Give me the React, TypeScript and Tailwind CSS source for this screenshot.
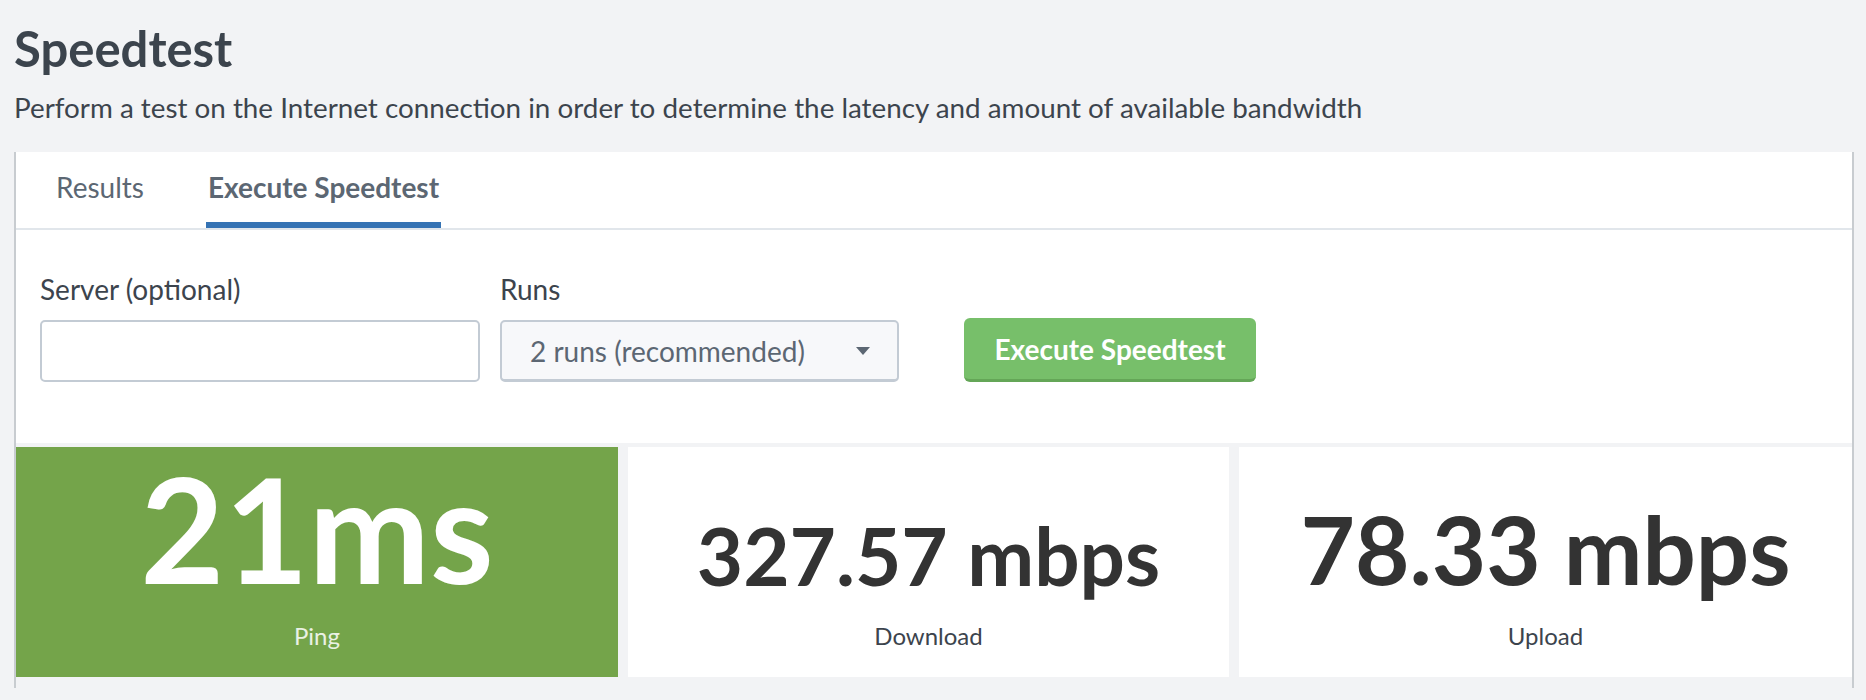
import React from "react";

const stats = [
  {
    id: "ping",
    value: "21ms",
    label: "Ping",
    card: "bg-[#74a44a]",
    valueClass: "text-white text-[145px] leading-[145px] pt-[9px]",
    labelClass: "text-white/85 mt-[20px]",
  },
  {
    id: "download",
    value: "327.57 mbps",
    label: "Download",
    card: "bg-white",
    valueClass: "text-[#333333] text-[80px] leading-[80px] pt-[68px]",
    labelClass: "text-[#3c444d] mt-[26px]",
  },
  {
    id: "upload",
    value: "78.33 mbps",
    label: "Upload",
    card: "bg-white",
    valueClass: "text-[#333333] text-[94px] leading-[94px] pt-[55px]",
    labelClass: "text-[#3c444d] mt-[25px]",
  },
] as const;

export default function App() {
  return (
    <div className="min-h-[700px] bg-[#f2f3f5] font-['Lato','Open_Sans',sans-serif] text-[#3c444d]">
      <div className="pl-[14px] pr-[12px]">
        {/* Page header */}
        <h1 className="pt-[20px] text-[49px] leading-[56px] font-bold text-[#3c444d]">Speedtest</h1>
        <p className="mt-[14px] text-[27.8px] leading-[36px]">
          Perform a test on the Internet connection in order to determine the latency and amount of
          available bandwidth
        </p>

        {/* Panel */}
        <div className="mt-[26px] border-x-2 border-[#c8ccd0] bg-white">
          <div className="flex gap-[62px] border-b-2 border-[#e1e6eb] pl-[40px] text-[28px] leading-[34px]">
            <button className="pt-[18px] pb-[18px] border-b-[6px] border-transparent text-[#5c6773]">
              Results
            </button>
            <button className="px-[2px] pt-[18px] pb-[18px] border-b-[6px] border-[#3573b4] font-bold text-[#5c6773]">
              Execute Speedtest
            </button>
          </div>

          <div className="flex items-end pl-[24px] pt-[43px] pb-[61px] text-[28px] leading-[32px]">
            <div className="flex flex-col">
              <label className="mb-[15px]">Server (optional)</label>
              <input
                type="text"
                className="h-[62px] w-[440px] rounded-[5px] border-2 border-[#c3cbd4] bg-white px-[20px] outline-none"
              />
            </div>
            <div className="ml-[20px] flex flex-col">
              <label className="mb-[15px]">Runs</label>
              <div className="flex h-[62px] w-[399px] items-center justify-between rounded-[5px] border-2 border-b-[3px] border-[#c3cbd4] bg-[#f7f8fa] pl-[28px] pr-[27px] text-[#5c6773]">
                <span>2 runs (recommended)</span>
                <svg width="14" height="8" viewBox="0 0 14 8">
                  <polygon points="0,0 14,0 7,8" fill="#5c6773" />
                </svg>
              </div>
            </div>
            <button className="ml-[65px] flex h-[64px] w-[292px] items-center justify-center rounded-[6px] border-b-[3px] border-[#64a657] bg-[#77bf6a] text-[28px] font-bold text-white">
              Execute Speedtest
            </button>
          </div>

          {/* Result cards */}
          <div className="grid grid-cols-[602px_601px_1fr] gap-x-[10px] bg-[#f2f3f5] pt-[4px] pb-[11px]">
            {stats.map((s) => (
              <div key={s.id} className={`flex h-[230px] flex-col items-center ${s.card}`}>
                <div className={`font-bold whitespace-nowrap ${s.valueClass}`}>{s.value}</div>
                <div className={`text-[24px] leading-[30px] ${s.labelClass}`}>{s.label}</div>
              </div>
            ))}
          </div>
        </div>
      </div>
    </div>
  );
}
